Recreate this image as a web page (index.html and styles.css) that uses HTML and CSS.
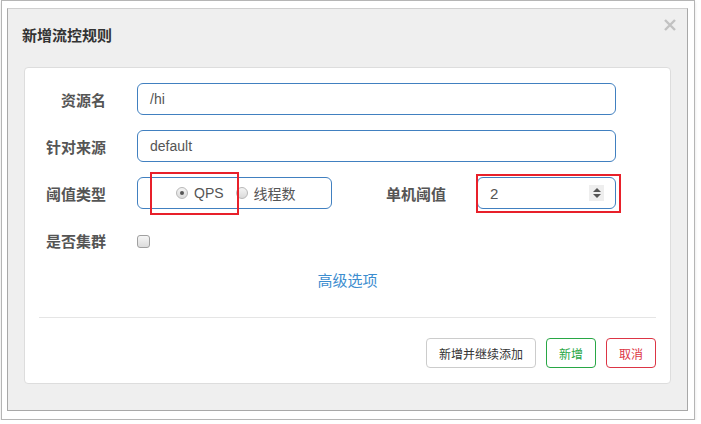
FILE: index.html
```html
<!DOCTYPE html>
<html lang="zh-CN">
<head>
    <meta charset="UTF-8">
    <title>新增流控规则</title>
    <link rel="stylesheet" href="styles.css">
</head>
<body>
<div class="frame">
    <div class="dialog">
        <div class="dialog-header">
            <h3 class="dialog-title">新增流控规则</h3>
            <span class="close">
                <svg width="12" height="12" viewBox="0 0 12 12"><path d="M1 1L11 11M11 1L1 11" stroke="#c2c2c2" stroke-width="2.4" fill="none"/></svg>
            </span>
        </div>
        <div class="panel">
            <div class="row">
                <label class="label">资源名</label>
                <div class="field field-wide">/hi</div>
            </div>
            <div class="row">
                <label class="label">针对来源</label>
                <div class="field field-wide">default</div>
            </div>
            <div class="row">
                <label class="label">阈值类型</label>
                <div class="field radio-box">
                    <span class="radio checked"></span><span class="radio-text">QPS</span>
                    <span class="radio"></span><span class="radio-text">线程数</span>
                    <span class="mark mark-qps"></span>
                </div>
                <label class="label label-count">单机阈值</label>
                <div class="field field-num">
                    <span class="num-value">2</span>
                    <span class="spinner">
                        <svg width="10" height="12" viewBox="0 0 10 12"><path d="M5 1L9 5H1Z M5 11L9 7H1Z" fill="#555"/></svg>
                    </span>
                    <span class="mark mark-num"></span>
                </div>
            </div>
            <div class="row">
                <label class="label">是否集群</label>
                <span class="checkbox"></span>
            </div>
            <div class="advanced"><a href="#">高级选项</a></div>
            <hr class="divider">
            <div class="actions">
                <button class="btn btn-default">新增并继续添加</button>
                <button class="btn btn-success">新增</button>
                <button class="btn btn-danger">取消</button>
            </div>
        </div>
    </div>
</div>
</body>
</html>
```

FILE: styles.css
```css
* {
    margin: 0;
    padding: 0;
    box-sizing: border-box;
}
body {
    background: #fff;
    font-family: "Liberation Sans", "Noto Sans CJK SC", sans-serif;
    font-size: 14px;
    color: #555;
}
.frame {
    margin-left: 1px;
    width: 694px;
    height: 420px;
    border: 1px solid #b5b5b5;
    padding: 7px 6px 8px 5px;
    box-shadow: 0 2px 3px rgba(0, 0, 0, 0.12);
}
.dialog {
    height: 403px;
    background: #efefef;
    border: 1px solid #a8a8a8;
    border-top-color: #cfcfcf;
    padding: 0 16px 0 16px;
}
.dialog-header {
    height: 58px;
    display: flex;
    justify-content: space-between;
}
.dialog-title {
    margin-top: 17px;
    font-size: 15px;
    line-height: 20px;
    font-weight: bold;
    color: #333;
    margin-left: -2px;
}
.close {
    margin-top: 10px;
    margin-right: -5px;
    width: 12px;
    height: 12px;
}
.close svg {
    display: block;
}
.panel {
    background: #fff;
    border: 1px solid #ddd;
    border-radius: 4px;
    padding: 15px 14px 14px 14px;
    height: 317px;
}
.row {
    display: flex;
    align-items: center;
    height: 32px;
    margin-bottom: 15px;
}
.label {
    width: 67px;
    margin-right: 31px;
    text-align: right;
    font-size: 15px;
    font-weight: bold;
    color: #555;
    white-space: nowrap;
}
.field {
    height: 32px;
    border: 1px solid #4180c0;
    border-radius: 6px;
    display: flex;
    align-items: center;
    padding-left: 12px;
    font-size: 14px;
    color: #555;
    position: relative;
}
.field-wide {
    width: 479px;
}
.radio-box {
    width: 195px;
    padding-left: 38px;
}
.radio {
    width: 12px;
    height: 12px;
    border-radius: 50%;
    border: 1px solid #b8b8b8;
    background: linear-gradient(#f4f4f4, #dadada);
    position: relative;
    margin-right: 6px;
}
.radio.checked::after {
    content: "";
    position: absolute;
    left: 3px;
    top: 3px;
    width: 4px;
    height: 4px;
    border-radius: 50%;
    background: #555;
}
.radio-text {
    margin-right: 12px;
}
.label-count {
    width: 114px;
    margin-right: 31px;
}
.field-num {
    width: 139px;
    padding-left: 12px;
    justify-content: space-between;
    padding-right: 11px;
}
.num-value {
    font-size: 15px;
}
.spinner {
    width: 15px;
    height: 16px;
    background: #eee;
    display: flex;
    align-items: center;
    justify-content: center;
}
.mark {
    position: absolute;
    border: 2px solid #e8202a;
}
.mark-qps {
    left: 12px;
    top: -6px;
    width: 89px;
    height: 43px;
}
.mark-num {
    left: -2px;
    top: -4px;
    width: 145px;
    height: 39px;
}
.checkbox {
    width: 13px;
    height: 13px;
    margin-top: 3px;
    border: 1px solid #a0a0a0;
    border-radius: 3px;
    background: linear-gradient(#f6f6f6, #dcdcdc);
}
.advanced {
    text-align: center;
    line-height: 20px;
    font-size: 15px;
}
.advanced a {
    color: #3c8dcf;
    text-decoration: none;
}
.divider {
    border: none;
    border-top: 1px solid #e5e5e5;
    margin-top: 26px;
}
.actions {
    display: flex;
    justify-content: flex-end;
    gap: 10px;
    margin-top: 20px;
}
.btn {
    height: 30px;
    padding: 0 12px;
    background: #fff;
    border: 1px solid #ccc;
    border-radius: 4px;
    font-family: "Liberation Sans", "Noto Sans CJK SC", sans-serif;
    font-size: 12px;
    color: #333;
}
.btn-success {
    border-color: #28a745;
    color: #28a745;
}
.btn-danger {
    border-color: #dc3545;
    color: #dc3545;
}
```
